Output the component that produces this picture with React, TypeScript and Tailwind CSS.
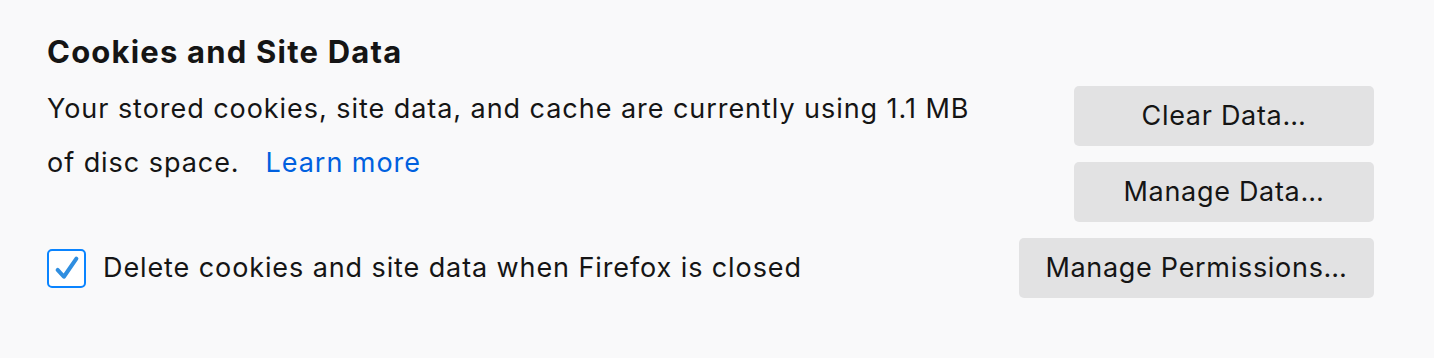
const buttonClass =
  "h-[60px] rounded-[5px] bg-[#e2e2e3] text-[27px] tracking-[0.7px] leading-[60px] text-[#151515] text-center";

const App = () => {
  return (
    <div
      className="w-[1434px] h-[358px] bg-[#f9f9fa] pl-[47px] pr-[60px] pt-[34px] text-[#151515]"
      style={{ fontFamily: "Inter, 'Noto Sans', sans-serif" }}
    >
      <h2 className="text-[31px] leading-[36px] font-bold tracking-[1.2px]">Cookies and Site Data</h2>

      <div className="mt-[12px] flex items-start justify-between">
        <p className="text-[27px] leading-[54px] tracking-[0.95px] w-[940px]">
          Your stored cookies, site data, and cache are currently using 1.1 MB of disc space.
          <a className="ml-[26px] text-[#0060df]" href="#">
            Learn more
          </a>
        </p>
        <div className="mt-[4px] flex flex-col gap-[16px]">
          <button className={`${buttonClass} w-[300px]`}>Clear Data…</button>
          <button className={`${buttonClass} w-[300px]`}>Manage Data…</button>
        </div>
      </div>

      <div className="mt-[16px] flex items-center justify-between">
        <label className="flex items-center gap-[17px] text-[27px] leading-[54px] tracking-[0.9px]">
          <span className="flex h-[39px] w-[39px] items-center justify-center rounded-[5px] border-2 border-[#0a84ff] bg-white">
            <svg viewBox="0 0 24 24" className="h-[30px] w-[30px]" fill="none">
              <path
                d="M4.5 13.5l5 5.5L19.5 4.5"
                stroke="#2f8ee0"
                strokeWidth="3.2"
                strokeLinecap="round"
                strokeLinejoin="round"
              />
            </svg>
          </span>
          Delete cookies and site data when Firefox is closed
        </label>
        <button className={`${buttonClass} w-[355px]`}>Manage Permissions…</button>
      </div>
    </div>
  );
};

export default App;
